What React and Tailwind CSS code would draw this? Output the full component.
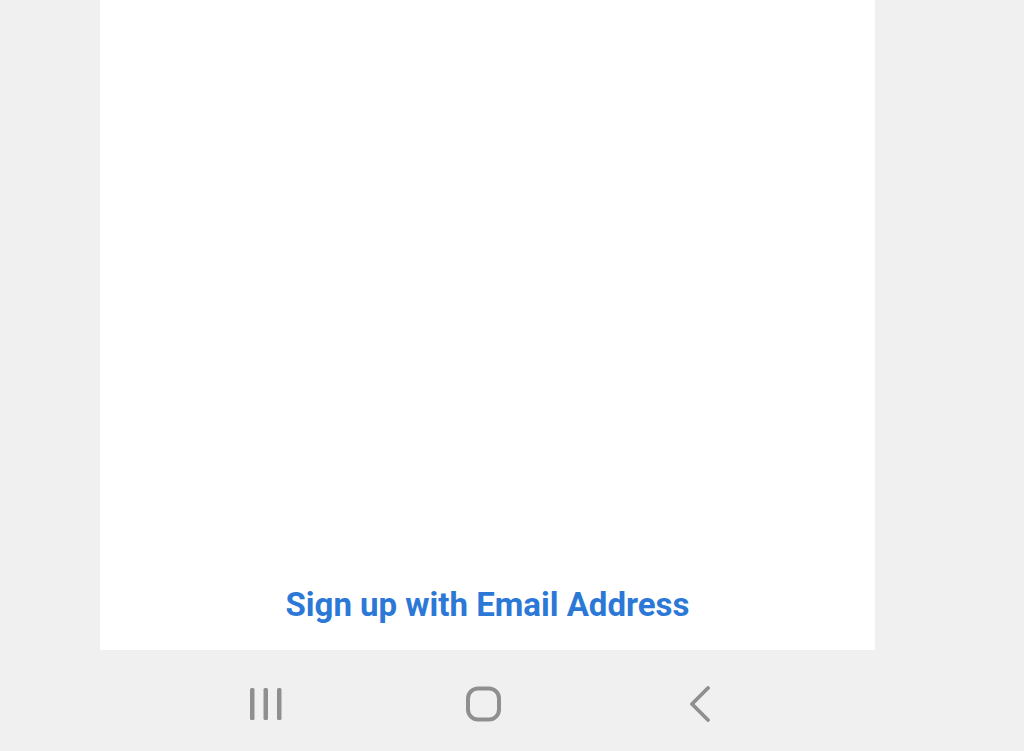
import React from 'react';

const NavBar = () => (
    <div className="flex-1 flex items-center pt-[6px]">
        <div className="ml-[249px] flex items-center">
            {/* recents */}
            <svg width="34" height="34" viewBox="0 0 34 34">
                <rect x="1" y="1" width="4.5" height="32" rx="1.5" fill="#8f8f8f" />
                <rect x="14.5" y="1" width="4.5" height="32" rx="1.5" fill="#8f8f8f" />
                <rect x="28" y="1" width="4.5" height="32" rx="1.5" fill="#8f8f8f" />
            </svg>
            {/* home */}
            <svg className="ml-[182px]" width="37" height="36" viewBox="0 0 37 36">
                <rect x="3" y="2.5" width="31" height="31" rx="10" fill="none" stroke="#8f8f8f" strokeWidth="4" />
            </svg>
            {/* back */}
            <svg className="ml-[186px]" width="24" height="36" viewBox="0 0 24 36">
                <path d="M20 2 L4 18 L20 34" fill="none" stroke="#8f8f8f" strokeWidth="3.8" strokeLinecap="round" strokeLinejoin="round" />
            </svg>
        </div>
    </div>
);

export default function App() {
    return (
        <div className="w-[1024px] h-[751px] bg-[#f0f0f0] flex flex-col" style={{ fontFamily: 'Roboto, "Liberation Sans", sans-serif' }}>
            <div className="ml-[100px] w-[775px] h-[650px] bg-white flex flex-col justify-end items-center pb-[29px]">
                <button className="text-[#2b78d6] font-bold text-[33px] leading-none">
                    Sign up with Email Address
                </button>
            </div>
            <NavBar />
        </div>
    );
}
